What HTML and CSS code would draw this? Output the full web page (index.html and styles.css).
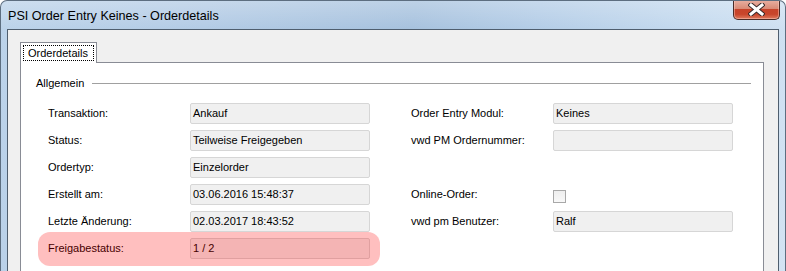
FILE: index.html
```html
<!DOCTYPE html>
<html>
<head>
<meta charset="utf-8">
<link rel="stylesheet" href="styles.css">
</head>
<body>
<div class="window">
  <div class="titlebar">
    <span class="title">PSI Order Entry Keines - Orderdetails</span>
    <div class="close">
      <svg width="17" height="13" viewBox="0 0 17 13">
        <path d="M3 2 L14 11 M14 2 L3 11" stroke="#3a2a2a" stroke-width="5" stroke-linecap="square" fill="none"/>
        <path d="M3 2 L14 11 M14 2 L3 11" stroke="#ffffff" stroke-width="3" stroke-linecap="square" fill="none"/>
      </svg>
    </div>
  </div>
  <div class="client">
    <div class="tabs">
      <div class="tab"><span class="tab-label">Orderdetails</span></div>
    </div>
    <div class="panel">
      <div class="group">
        <div class="group-head"><span class="group-title">Allgemein</span><span class="group-line"></span></div>
        <div class="grid">
          <span class="label">Transaktion:</span>
          <span class="field">Ankauf</span>
          <span class="label">Order Entry Modul:</span>
          <span class="field">Keines</span>

          <span class="label">Status:</span>
          <span class="field">Teilweise Freigegeben</span>
          <span class="label">vwd PM Ordernummer:</span>
          <span class="field"></span>

          <span class="label">Ordertyp:</span>
          <span class="field">Einzelorder</span>
          <span class="label"></span>
          <span class="empty"></span>

          <span class="label">Erstellt am:</span>
          <span class="field">03.06.2016 15:48:37</span>
          <span class="label">Online-Order:</span>
          <span class="check-cell"><span class="checkbox"></span></span>

          <span class="label">Letzte Änderung:</span>
          <span class="field">02.03.2017 18:43:52</span>
          <span class="label">vwd pm Benutzer:</span>
          <span class="field">Ralf</span>

          <span class="label">Freigabestatus:</span>
          <span class="field">1 / 2</span>
          <span class="label"></span>
          <span class="empty"></span>

          <div class="highlight"></div>
        </div>
      </div>
    </div>
  </div>
</div>
</body>
</html>
```

FILE: styles.css
```css
* { box-sizing: border-box; }
html, body {
  margin: 0;
  padding: 0;
  background: #ffffff;
}
body {
  width: 786px;
  height: 271px;
  overflow: hidden;
  font-family: "Liberation Sans", Arial, sans-serif;
  font-size: 11px;
  line-height: 13px;
  color: #000;
}
.window {
  width: 786px;
  height: 271px;
  display: flex;
  flex-direction: column;
  border: 1px solid #5d6e80;
  border-bottom: none;
  border-radius: 7px 7px 0 0;
  background:
    linear-gradient(180deg, rgba(255,255,255,0.25) 0px, rgba(255,255,255,0) 28px),
    linear-gradient(100deg, #bcd3ea 0%, #b3cbe5 25%, #a7c2de 50%, #b4cde7 65%, #c6dbef 85%, #d3e3f3 100%);
  overflow: hidden;
}
.titlebar {
  height: 28px;
  flex: none;
  display: flex;
  align-items: flex-start;
}
.title {
  font-family: "Liberation Sans", Arial, sans-serif;
  font-size: 12.6px;
  line-height: 14px;
  padding-left: 7px;
  padding-top: 8px;
  color: #000;
}
.close {
  margin-left: auto;
  margin-right: 5px;
  margin-top: -1px;
  width: 47px;
  height: 20px;
  border: 1px solid #4a2c28;
  border-top: none;
  border-radius: 0 0 5px 5px;
  background: linear-gradient(180deg, #e9b1a3 0%, #d98b77 45%, #c7432a 50%, #c8452b 75%, #df7a5e 100%);
  box-shadow: inset 0 0 0 1px rgba(255,210,200,0.45);
  display: flex;
  align-items: center;
  justify-content: center;
}
.close svg { display: block; margin-top: 0; }
.client {
  flex: 1;
  margin: 0 6px;
  border: 1px solid #4f5e6e;
  border-bottom: none;
  background: #f0f0f0;
  padding: 12px 14px 0 12px;
  display: flex;
  flex-direction: column;
}
.tabs {
  display: flex;
  flex: none;
}
.tab {
  position: relative;
  z-index: 1;
  background: #ffffff;
  border: 1px solid #898c95;
  border-bottom: none;
  margin-bottom: -1px;
  padding: 2px 2px 2px 2px;
  height: 21px;
}
.tab-label {
  display: block;
  border: 1px dotted #000;
  padding: 0 5px 0 4px;
  height: 16px;
  line-height: 14px;
}
.panel {
  flex: 1;
  background: #ffffff;
  border: 1px solid #898c95;
  border-bottom: none;
  padding: 14px 12px 0 15px;
}
.group-head {
  display: flex;
  align-items: center;
  height: 13px;
}
.group-line {
  flex: 1;
  height: 1px;
  background: #a0a0a0;
  margin-left: 8px;
}
.grid {
  position: relative;
  margin: 13px 0 0 12px;
  display: grid;
  grid-template-columns: 142px 221px 142px 180px;
  grid-auto-rows: 21px;
  row-gap: 6px;
}
.label {
  display: flex;
  align-items: center;
  color: #000;
}
.field {
  width: 180px;
  height: 21px;
  border: 1px solid #d6d6d6;
  border-radius: 2px;
  background: #f0f0f0;
  display: flex;
  align-items: center;
  padding-left: 2px;
}
.check-cell {
  display: flex;
  align-items: flex-start;
  padding-top: 6px;
}
.checkbox {
  width: 13px;
  height: 13px;
  border: 1px solid #a8a8a8;
  background: linear-gradient(180deg, #eeeeee, #f8f8f8);
}
.highlight {
  position: absolute;
  left: -10px;
  top: 129px;
  width: 342px;
  height: 34px;
  border-radius: 12px;
  background: rgba(255, 0, 0, 0.25);
  filter: blur(0.6px);
  pointer-events: none;
}
```
